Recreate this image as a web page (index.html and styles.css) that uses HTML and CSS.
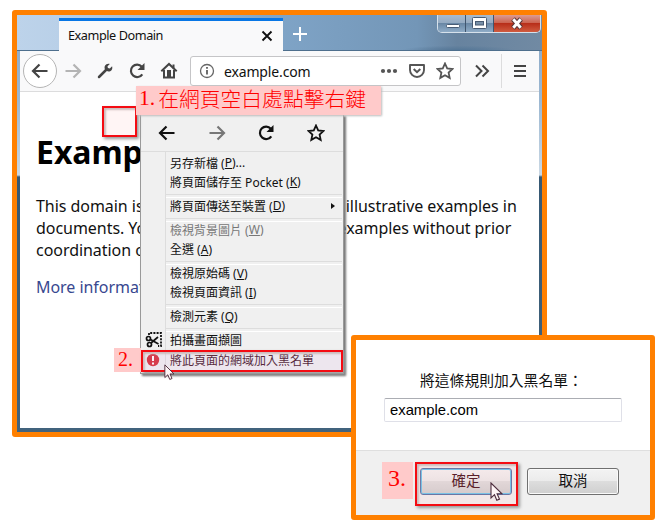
FILE: index.html
```
<!DOCTYPE html>
<html lang="zh-Hant">
<head>
<meta charset="utf-8">
<title>Example Domain</title>
<link rel="stylesheet" href="styles.css">
</head>
<body>
<svg class="defs" width="0" height="0">
  <defs>
    <symbol id="arrow" viewBox="0 0 18 18"><path d="M16.500 9H2M8.500 2.500L2 9l6.500 6.500" fill="none" stroke="currentColor" stroke-width="2.200"/></symbol>
    <symbol id="reload" viewBox="0 0 18 18"><path d="M14.300 12.300A6.200 6.200 0 1 1 13.800 4.800" fill="none" stroke="currentColor" stroke-width="2.200"/><path d="M16.500 1v7H9.500z" fill="currentColor"/></symbol>
    <symbol id="star" viewBox="0 0 18 18"><path d="M9 1.500l2.200 4.900 5.300.600-3.900 3.600 1.100 5.300L9 13.300l-4.700 2.600 1.100-5.300L1.500 7l5.300-.600z" fill="none" stroke="currentColor" stroke-width="1.800" stroke-linejoin="miter"/></symbol>
    <symbol id="cursor" viewBox="0 0 13 20"><path d="M1 1v15l3.500-3.300 2.300 5.500 2.700-1.100-2.400-5.400h4.700z" fill="#fff5f6" stroke="#4d2c3c" stroke-width="1.100"/></symbol>
  </defs>
</svg>
<main class="desktop">
  <section class="browser">
    <div class="tabs">
      <div class="tab"><span>Example Domain</span>
        <svg width="12" height="12" viewBox="0 0 12 12"><path d="M1.500 1.500l9 9M10.500 1.500l-9 9" stroke="#111" stroke-width="1.900"/></svg>
      </div>
      <svg class="plus" width="16" height="16" viewBox="0 0 16 16"><path d="M8 1v14M1 8h14" stroke="#fff" stroke-width="2"/></svg>
      <div class="controls">
        <i class="ctl"><svg width="28" height="17" viewBox="0 0 28 17"><rect x="8.500" y="9.500" width="13" height="3" rx="1" fill="#fff" stroke="#485b73"/></svg></i>
        <i class="ctl"><svg width="28" height="17" viewBox="0 0 28 17"><rect x="6.500" y="2.500" width="14" height="11" rx="1" fill="#fff" stroke="#485b73"/><rect x="9.500" y="6.500" width="8" height="3.500" fill="#7890a8" stroke="#485b73"/></svg></i>
        <i class="ctl close"><svg width="46" height="17" viewBox="0 0 46 17"><path d="M19 4l8 9M27 4l-8 9" stroke="#593638" stroke-width="5"/><path d="M19.300 4.300l7.400 8.400M26.700 4.300l-7.400 8.400" stroke="#fff" stroke-width="3"/></svg></i>
      </div>
    </div>
    <div class="content">
      <div class="toolbar">
        <span class="tool back"><svg width="18" height="18"><use href="#arrow"/></svg></span>
        <span class="tool forward"><svg class="flip" width="18" height="18"><use href="#arrow"/></svg></span>
        <span class="tool"><svg width="16" height="16" viewBox="0 0 16 16"><path d="M2 14l7-7" stroke="currentColor" stroke-width="2.500" stroke-linecap="round"/><path d="M12.800.900L10.500 3.200l.400 1.900 1.900.400 2.300-2.300c.700 2.300-.200 4.200-1.900 5-1.200.500-2.400.400-3.400-.100L7.900 6.200C7.400 5 7.400 3.800 8 2.700 8.800 1.200 10.700.300 12.800.900z" fill="currentColor"/></svg></span>
        <span class="tool"><svg width="18" height="18"><use href="#reload"/></svg></span>
        <span class="tool"><svg width="18" height="18" viewBox="0 0 18 18"><path d="M1.300 9.300L9 2l7.700 7.300" fill="none" stroke="currentColor" stroke-width="2"/><path d="M4 8v7.500h10V8M13.500 2.500v4" fill="none" stroke="currentColor" stroke-width="2"/><path d="M7 15V8h4v7z" fill="currentColor"/></svg></span>
        <div class="address">
          <svg width="16" height="16" viewBox="0 0 16 16"><circle cx="8" cy="8" r="6.500" fill="none" stroke="#666" stroke-width="1.300"/><path d="M8 7v4.500M8 4v1.700" stroke="#555" stroke-width="1.700"/></svg>
          <span class="url">example.com</span>
          <svg class="dots" width="18" height="6" viewBox="0 0 18 6"><circle cx="3" cy="3" r="2.100"/><circle cx="9" cy="3" r="2.100"/><circle cx="15" cy="3" r="2.100"/></svg>
          <svg class="pocket" width="18" height="16" viewBox="0 0 18 16"><path d="M2 2h14v5a7 7 0 0 1-14 0z" fill="none" stroke="#555" stroke-width="1.900" stroke-linejoin="round"/><path d="M5.700 6L9 9.200 12.300 6" fill="none" stroke="#555" stroke-width="2"/></svg>
          <svg class="bookmark" width="18" height="18"><use href="#star"/></svg>
        </div>
        <svg class="more" width="16" height="14" viewBox="0 0 16 14"><path d="M2 1.500L7.500 7 2 12.500M8.500 1.500L14 7l-5.500 5.500" fill="none" stroke="#444" stroke-width="2"/></svg>
        <span class="hamburger"><svg width="14" height="14" viewBox="0 0 14 14"><path d="M1 2h12M1 7h12M1 12h12" stroke="#444" stroke-width="2"/></svg></span>
      </div>
      <article class="page">
        <h1>Example Domain</h1>
        <p>This domain is established to be used for illustrative examples in<br>documents. You may use this domain in examples without prior<br>coordination or asking for permission.</p>
        <a>More information...</a>
      </article>
    </div>
  </section>

  <nav class="menu">
    <div class="menu-nav">
      <svg width="18" height="18"><use href="#arrow"/></svg>
      <svg class="flip muted" width="18" height="18"><use href="#arrow"/></svg>
      <svg width="18" height="18"><use href="#reload"/></svg>
      <svg width="18" height="18"><use href="#star"/></svg>
    </div>
    <ul>
      <li>另存新檔 (<u>P</u>)...</li>
      <li>將頁面儲存至 Pocket (<u>K</u>)</li>
      <li class="split">將頁面傳送至裝置 (<u>D</u>)<b class="submenu"></b></li>
      <li class="split muted">檢視背景圖片 (<u>W</u>)</li>
      <li>全選 (<u>A</u>)</li>
      <li class="split">檢視原始碼 (<u>V</u>)</li>
      <li>檢視頁面資訊 (<u>I</u>)</li>
      <li class="split">檢測元素 (<u>Q</u>)</li>
      <li class="split"><svg class="icon" width="18" height="18" viewBox="0 0 18 18"><path d="M4 4V2h12v13h-3" fill="none" stroke="#111" stroke-width="1.800" stroke-dasharray="2 1.200"/><g fill="none" stroke="#111" stroke-width="1.700"><circle cx="3.500" cy="7.500" r="2"/><circle cx="4.500" cy="13.500" r="2"/><path d="M5.500 8.500l8 4.500M6 12l7-6"/></g></svg>拍攝畫面擷圖</li>
      <li class="blacklist"><svg class="icon" width="14" height="14" viewBox="0 0 14 14"><circle cx="7" cy="7" r="6.200" fill="#d52b35"/><path d="M7 3v5M7 9.500v2" stroke="#fff" stroke-width="2"/></svg>將此頁面的網域加入黑名單</li>
    </ul>
  </nav>

  <section class="dialog">
    <div class="prompt">
      <label>將這條規則加入黑名單：</label>
      <div class="field">example.com</div>
    </div>
    <footer><span class="button primary">確定</span><span class="button">取消</span></footer>
  </section>

  <div class="mark blank"></div>
  <div class="note step1"><span>1.</span><span class="cjk">在網頁空白處點擊右鍵</span></div>
  <div class="note step2">2.</div>
  <div class="mark entry"></div>
  <div class="note step3">3.</div>
  <div class="mark confirm"></div>
  <svg class="pointer first" width="11" height="17"><use href="#cursor"/></svg>
  <svg class="pointer second" width="13" height="20"><use href="#cursor"/></svg>
</main>
</body>
</html>
```
FILE: styles.css
```
* { box-sizing: border-box; }
body { margin: 0; background: #fff; font-family: "Noto Sans", "Noto Sans CJK TC", sans-serif; color: #111; }
svg { display: block; flex: none; }
.defs { position: absolute; }
.desktop { position: relative; width: 665px; height: 528px; overflow: hidden; }
.flip { transform: scaleX(-1); }

.browser { position: absolute; left: 12px; top: 10px; width: 535px; height: 427px; border: 5px solid #ff8000; border-radius: 3px; display: flex; flex-direction: column; padding: 0 3px 4px; background: linear-gradient(#87a5c4 0, #9bb7d1 85px, #cad8e4 160px, #365873 162px, #41637d 100%); }
.tabs { flex: none; height: 36px; margin: 0 -3px; padding-left: 42px; display: flex; align-items: flex-start; border-bottom: 1px solid #4e6f8d; background: radial-gradient(ellipse at 84% 100%, #557797 0, transparent 9%), linear-gradient(90deg, #bdd3ea 0, #b9d0e8 42px, #80a5c8 250px, #7396b7 400px, #67839f 440px, #718aa3 100%); }
.tab { width: 224px; height: 33px; margin-top: 3px; border-top: 3px solid #0876e5; background: #f9f9fa; display: flex; justify-content: space-between; align-items: center; padding: 0 10px 3px 9px; font-size: 12.700px; letter-spacing: -.45px; }
.tab svg { margin-top: 2px; }
.plus { margin: 11px 0 0 9px; }
.controls { margin-left: auto; margin-right: 1px; display: flex; height: 18px; border: 1px solid #d6e1eb; border-top: 0; border-radius: 0 0 5px 5px; overflow: hidden; }
.ctl { width: 28px; height: 17px; border-right: 1px solid #40566f; background: linear-gradient(#a8bacd 0, #95abc2 45%, #6886a4 48%, #8facc7 100%); }
.ctl.close { width: 46px; border: 0; background: linear-gradient(#db9b91 0, #cc6552 45%, #b72d18 48%, #d05c40 100%); }
.content { flex: 1; display: flex; flex-direction: column; background: #fff; min-height: 0; }
.toolbar { height: 41px; flex: none; display: flex; align-items: center; background: #f9f9fa; border-bottom: 1px solid #dcdcdd; padding-left: 3px; color: #444; }
.tool { width: 32px; display: flex; justify-content: center; }
.tool.back { width: 34px; height: 34px; align-items: center; border: 1px solid #b5b5b5; border-radius: 50%; background: #fff; }
.tool.forward { color: #b4b4b4; }
.address { width: 271px; height: 30px; margin-left: 5px; margin-right: 13px; border: 1px solid #c5c5c7; border-radius: 3px; background: #fff; display: flex; align-items: center; padding-left: 8px; color: #555; }
.url { margin-left: 9px; font-size: 14px; letter-spacing: -.15px; color: #111; }
.dots { margin-left: auto; margin-right: 10px; fill: #555; }
.pocket { margin-right: 10px; }
.bookmark { margin-right: 6px; }
.hamburger { margin-left: 11px; height: 34px; display: flex; align-items: center; border-left: 1px solid #dcdcdd; padding-left: 11px; }
.page { padding: 38px 0 0 16px; white-space: nowrap; font-size: 16px; line-height: 21.800px; letter-spacing: -.045px; }
.page h1 { margin: 0 0 22px; font-size: 32px; line-height: 44px; color: #000; }
.page p { margin: 0 0 16px; }
.page a { color: #38488f; }

.menu { position: absolute; left: 140px; top: 114px; width: 204px; height: 260px; background: #f0f0f0; border: 1px solid #999; box-shadow: 2px 2px 2px #777; font-size: 12px; }
.menu-nav { height: 37px; display: flex; align-items: center; justify-content: space-between; padding: 0 18px 0 17px; border-bottom: 1px solid #ddd; color: #111; }
.menu ul { list-style: none; margin: 0 0 0 24px; padding: 1px 0 0; border-left: 1px solid #ddd; }
.menu li { height: 19.250px; display: flex; align-items: center; padding-left: 4px; white-space: pre; position: relative; }
.menu .split { height: 24px; padding-top: 4.750px; }
.menu .split::before { content: ""; position: absolute; top: 2px; left: 0; right: 1px; height: 2px; border-top: 1px solid #ddd; border-bottom: 1px solid #fff; }
.menu .muted { color: #777; }
.menu u { text-underline-offset: 1px; }
.submenu { margin-left: auto; margin-right: 8px; border: 3px solid transparent; border-left: 4px solid #111; border-right: 0; }
.icon { margin-left: -25px; margin-right: 7px; }
.blacklist { color: #43121f; }
.blacklist .icon { margin-left: -24px; margin-right: 10px; }

.dialog { position: absolute; left: 351px; top: 335px; width: 304px; height: 185px; border: 5px solid #ff8000; border-radius: 3px; background: #fff; display: flex; flex-direction: column; }
.prompt { flex: 1; padding: 30px 28px 0; }
.prompt label { display: block; height: 28px; line-height: 20px; padding-left: 36px; white-space: nowrap; font-size: 14.800px; font-family: "Noto Sans CJK TC", sans-serif; }
.field { height: 24px; border: 1px solid #dfe0e8; border-top-color: #abadb3; border-radius: 2px; padding-left: 5px; font: 14.800px/22px "Liberation Sans", sans-serif; color: #000; }
.dialog footer { height: 65px; background: #f0f0f0; border-top: 1px solid #dfdfdf; display: flex; gap: 15px; padding: 17px 0 0 64px; }
.button { width: 92px; height: 27px; border: 1px solid #707070; border-radius: 3px; background: linear-gradient(#f3f3f3 0, #ebebeb 49%, #dddddd 50%, #cfcfcf 100%); box-shadow: inset 0 0 0 1px #fafafa; text-align: center; line-height: 23px; font-size: 14.500px; }
.button.primary { border-color: #526ca0; box-shadow: inset 0 0 0 1px #62c4ed; color: #3e0710; }

.note { position: absolute; background: #ffcaca; color: #f00; font-family: "Liberation Serif", serif; box-shadow: 1px 1px 2px #bbb; display: flex; align-items: center; }
.step1 { left: 136px; top: 86px; width: 245px; height: 29px; padding: 0 0 4px 3px; gap: 3px; font-size: 21.500px; white-space: nowrap; }
.cjk { font: 300 20.800px/25px "Noto Sans CJK TC", sans-serif; }
.step2 { left: 114px; top: 348px; width: 27px; height: 24px; padding: 0 0 2px 4px; font-size: 20px; box-shadow: none; }
.step3 { left: 382px; top: 462px; width: 31px; height: 37px; padding: 0 0 5px 6px; font-size: 24px; box-shadow: none; }
.mark { position: absolute; border: 2px solid #f40b12; background: rgba(255, 210, 210, .22); box-shadow: 2px 2px 3px #999, inset 2px 2px 2px #cbb; }
.blank { left: 102px; top: 106px; width: 35px; height: 31px; }
.entry { left: 141px; top: 350px; width: 202px; height: 22px; background: rgba(218, 170, 225, .14); }
.confirm { left: 415px; top: 462px; width: 103px; height: 44px; background: rgba(255, 180, 190, .15); }
.pointer { position: absolute; }
.first { left: 164px; top: 364px; }
.second { left: 490px; top: 482px; }
```
